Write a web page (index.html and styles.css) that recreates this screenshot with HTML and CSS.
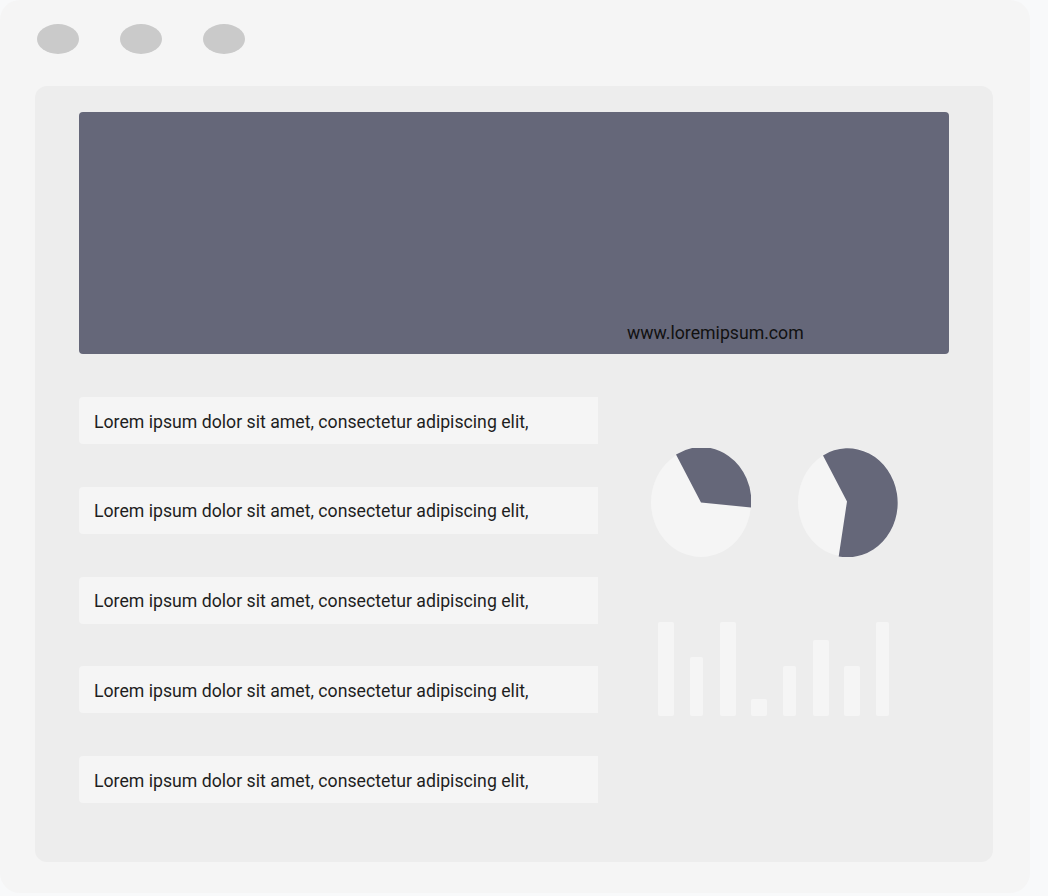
FILE: index.html
```html
<!DOCTYPE html>
<html lang="en">
<head>
<meta charset="utf-8">
<title>Dashboard mockup</title>
<link rel="stylesheet" href="styles.css">
</head>
<body>
<div class="window">
  <div class="dots">
    <span class="dot"></span>
    <span class="dot"></span>
    <span class="dot"></span>
  </div>
  <div class="panel">
    <div class="banner">
      <span class="url">www.loremipsum.com</span>
    </div>
    <div class="lower">
      <div class="rows">
        <div class="row">Lorem ipsum dolor sit amet, consectetur adipiscing elit,</div>
        <div class="row">Lorem ipsum dolor sit amet, consectetur adipiscing elit,</div>
        <div class="row">Lorem ipsum dolor sit amet, consectetur adipiscing elit,</div>
        <div class="row">Lorem ipsum dolor sit amet, consectetur adipiscing elit,</div>
        <div class="row">Lorem ipsum dolor sit amet, consectetur adipiscing elit,</div>
      </div>
      <div class="charts">
        <div class="pies">
          <svg class="pie" width="100" height="109" viewBox="0 0 100 109">
            <ellipse cx="50" cy="54.5" rx="50" ry="54.5" fill="#f5f5f5"/>
            <path d="M50 54.5 L25 6.6 A50 54.5 0 0 1 100 59.6 Z" fill="#656779"/>
          </svg>
          <svg class="pie" width="100" height="109" viewBox="0 0 100 109">
            <ellipse cx="50" cy="54.5" rx="50" ry="54.5" fill="#f5f5f5"/>
            <path d="M49 53.4 L25 7.4 A50 54.5 0 1 1 40.7 108.4 Z" fill="#656779"/>
          </svg>
        </div>
        <div class="bars">
          <div class="slot"><div class="bar wide" style="height:94px"></div></div>
          <div class="slot"><div class="bar" style="height:59px"></div></div>
          <div class="slot"><div class="bar wide" style="height:94px"></div></div>
          <div class="slot"><div class="bar wide" style="height:17px"></div></div>
          <div class="slot"><div class="bar" style="height:50px"></div></div>
          <div class="slot"><div class="bar wide" style="height:76px"></div></div>
          <div class="slot"><div class="bar wide" style="height:50px"></div></div>
          <div class="slot"><div class="bar" style="height:94px"></div></div>
        </div>
      </div>
    </div>
  </div>
</div>
</body>
</html>
```

FILE: styles.css
```css
* { box-sizing: border-box; }

html, body {
  margin: 0;
  padding: 0;
  background: #f8f9fa;
  font-family: Roboto, "Liberation Sans", Arial, sans-serif;
}

.window {
  width: 1030px;
  height: 893px;
  background: #f5f5f5;
  border-radius: 20px;
  padding: 24px 37px 0 35px;
}

.dots {
  display: flex;
  gap: 41px;
  margin-left: 2px;
}

.dot {
  width: 42px;
  height: 30px;
  border-radius: 50%;
  background: #cacaca;
}

.panel {
  margin-top: 32px;
  width: 958px;
  height: 776px;
  background: #ededed;
  border-radius: 12px;
  padding: 26px 44px;
}

.banner {
  height: 242px;
  background: #656779;
  border-radius: 4px;
  display: flex;
  align-items: flex-end;
  padding: 0 0 11px 548px;
}

.url {
  font-size: 17.7px;
  line-height: 20px;
  color: #111;
}

.lower {
  margin-top: 43px;
  display: grid;
  grid-template-columns: 519px 1fr;
}

.rows {
  display: flex;
  flex-direction: column;
  gap: 42.75px;
}

.row {
  height: 47px;
  background: #f5f5f5;
  border-radius: 4px 0 0 4px;
  display: flex;
  align-items: center;
  padding: 2px 0 0 15px;
  font-size: 17.7px;
  color: #1e1e1e;
}

.charts {
  display: flex;
  flex-direction: column;
  align-items: center;
  padding-top: 51px;
}

.pies {
  display: flex;
  gap: 47px;
  padding-left: 2px;
}

.pie { display: block; }

.bars {
  margin-top: 65px;
  height: 94px;
  display: flex;
  align-items: flex-end;
  padding-left: 1px;
}

.slot {
  width: 31px;
  display: flex;
  justify-content: center;
}

.bar {
  width: 13px;
  background: #f5f5f5;
  border-radius: 2px;
}

.bar.wide { width: 16px; }
```
